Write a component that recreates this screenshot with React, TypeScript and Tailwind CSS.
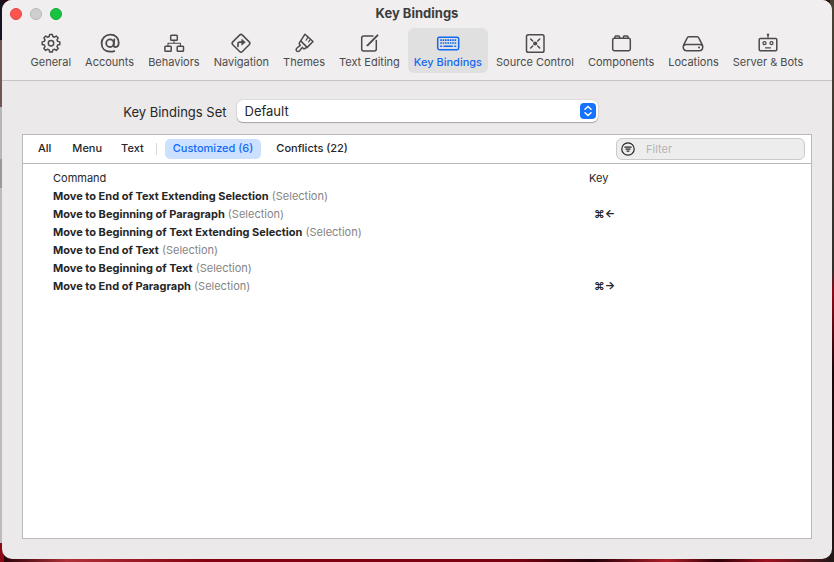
import React from "react";

type IconProps = { children: React.ReactNode };

function Icon({ children }: IconProps) {
  return (
    <svg
      width="24"
      height="22"
      viewBox="0 0 24 22"
      fill="none"
      stroke="currentColor"
      strokeWidth="1.5"
      strokeLinecap="round"
      strokeLinejoin="round"
      aria-hidden="true"
    >
      {children}
    </svg>
  );
}

const gearPath = (() => {
  const pts: string[] = [];
  for (let i = 0; i < 8; i++) {
    const a = (i * Math.PI) / 4 - Math.PI / 2;
    const at = (r: number, d: number) =>
      `${(12 + r * Math.cos(a + d)).toFixed(2)} ${(11.2 + r * Math.sin(a + d)).toFixed(2)}`;
    pts.push(at(6.9, -0.27), at(8.9, -0.15), at(8.9, 0.15), at(6.9, 0.27));
  }
  return "M" + pts.join("L") + "Z";
})();

const icons = {
  general: (
    <Icon>
      <path d={gearPath} />
      <circle cx="12" cy="11.2" r="2.7" />
    </Icon>
  ),
  accounts: (
    <Icon>
      <circle cx="12" cy="11.2" r="3.8" strokeWidth="1.8" />
      <path
        strokeWidth="1.8"
        d="M16.300 7.500 15.700 12.700c-.2 1.500.5 2.300 1.700 2.300 2 0 3.300-1.800 3.300-4.300 0-4.700-3.400-8-8.200-8-5.200 0-8.900 3.500-8.900 8.500 0 5.200 3.500 8.500 8.800 8.500 1.400 0 2.700-.2 3.900-.6"
      />
    </Icon>
  ),
  behaviors: (
    <Icon>
      <rect x="8.700" y="3.200" width="6.600" height="5" rx=".8" />
      <rect x="2.900" y="14.200" width="6.300" height="5" rx=".8" />
      <rect x="15.200" y="14.200" width="6.300" height="5" rx=".8" />
      <path d="M12 8.200v3M6 14v-2.800h12.400V14" strokeWidth="1.100" />
    </Icon>
  ),
  navigation: (
    <Icon>
      <rect x="5.200" y="4.500" width="13.600" height="13.600" rx="2" transform="rotate(45 12 11.3)" />
      <path d="M9 14.300v-2.500c0-1 .6-1.700 1.700-1.700H13" strokeWidth="1.700" />
      <path d="M13 7.600 16.300 10.200 13 12.800z" fill="currentColor" strokeWidth=".8" />
    </Icon>
  ),
  themes: (
    <Icon>
      <path d="M13 2.200 21 9.500 15.200 15.400 8.700 8.900z" />
      <path d="M8.700 8.900 7.400 10.800c-.5.8-.2 1.300.3 1.800l.6.700-3.300 2.700c-2.300 2 .5 5 2.600 2.700l2.700-3.300.9.900c.6.500 1.200.5 1.900 0l2.100-.9" />
      <path d="M16 5.100 14.100 8.200M18.400 7.400 16.600 9.800" strokeWidth="1.200" />
    </Icon>
  ),
  editing: (
    <Icon>
      <path d="M16 4H6.700c-1.300 0-2 .7-2 2v11c0 1.300.7 2 2 2h10.600c1.300 0 2-.7 2-2V8.600" />
      <path d="M20.500 3.400 12 11.900M11.100 12.900l-.7.400" strokeWidth="2" />
    </Icon>
  ),
  keyboard: (
    <Icon>
      <rect x="1.700" y="5.200" width="21" height="12.600" rx="1.700" />
      <path
        d="M4.200 8.200h16M4.200 11h16"
        strokeWidth="1.700"
        strokeLinecap="butt"
        strokeDasharray="1.700 .68"
      />
      <path d="M4.200 14.300h2M7.500 14.300h9.400M18.200 14.300h2" strokeWidth="1.600" strokeLinecap="butt" />
    </Icon>
  ),
  source: (
    <Icon>
      <rect x="3.500" y="2.700" width="17.500" height="17.500" rx="1.800" />
      <circle cx="12.200" cy="11.500" r="2.100" fill="currentColor" stroke="none" />
      <path d="M7.700 7l2 2M16.700 7l-2 2M7.700 16l2-2M16.700 16l-2-2" />
    </Icon>
  ),
  components: (
    <Icon>
      <rect x="3.700" y="6.200" width="17.600" height="12.600" rx="1.700" />
      <path d="M6 6V4.900c0-.5.3-.8.800-.8h3c.5 0 .8.300.8.800V6M14.400 6V4.900c0-.5.3-.8.800-.8h3c.5 0 .8.300.8.800V6" />
    </Icon>
  ),
  locations: (
    <Icon>
      <path d="M8.100 4.700h7.800c1 0 1.700.5 2 1.400l3.500 7c1 2.600 0 5.600-2.800 5.600H5.400c-2.800 0-3.800-3-2.800-5.600l3.500-7c.3-.9 1-1.400 2-1.400z" />
      <path d="M3 13.400c.5-.6 1.200-.9 2-.9h14c.8 0 1.500.3 2 .9" />
      <circle cx="18" cy="15.600" r="1" fill="currentColor" stroke="none" />
    </Icon>
  ),
  bots: (
    <Icon>
      <rect x="3.200" y="6.400" width="17.600" height="12.300" rx="1.200" />
      <path d="M12 3.300v2.700M9.500 15.800h5" strokeWidth="1.200" />
      <circle cx="12" cy="2.800" r="1.200" fill="currentColor" stroke="none" />
      <circle cx="8.500" cy="11.200" r="1.500" strokeWidth="1.300" />
      <circle cx="15.500" cy="11.200" r="1.500" strokeWidth="1.300" />
    </Icon>
  ),
};

const sections = [
  { label: "General", icon: icons.general },
  { label: "Accounts", icon: icons.accounts },
  { label: "Behaviors", icon: icons.behaviors },
  { label: "Navigation", icon: icons.navigation },
  { label: "Themes", icon: icons.themes },
  { label: "Text Editing", icon: icons.editing },
  { label: "Key Bindings", icon: icons.keyboard, active: true },
  { label: "Source Control", icon: icons.source },
  { label: "Components", icon: icons.components },
  { label: "Locations", icon: icons.locations },
  { label: "Server & Bots", icon: icons.bots },
];

const bindings = [
  { command: "Move to End of Text Extending Selection", key: "" },
  { command: "Move to Beginning of Paragraph", key: "⌘←" },
  { command: "Move to Beginning of Text Extending Selection", key: "" },
  { command: "Move to End of Text", key: "" },
  { command: "Move to Beginning of Text", key: "" },
  { command: "Move to End of Paragraph", key: "⌘→" },
];

function TitleBar() {
  return (
    <div className="grid h-7 grid-cols-[1fr_auto_1fr] items-center px-2">
      <div className="flex gap-2">
        <button aria-label="Close" className="size-3 rounded-full border border-[#e0443e] bg-[#ff5450]" />
        <button aria-label="Minimize" className="size-3 rounded-full border border-[#b9b8b8] bg-[#d0cfcf]" />
        <button aria-label="Zoom" className="size-3 rounded-full border border-[#12a637] bg-[#17c440]" />
      </div>
      <h1 className="pb-0.5 text-[13px] leading-4 font-bold text-[#3d3c3c]">Key Bindings</h1>
    </div>
  );
}

function Toolbar() {
  return (
    <nav className="flex justify-center gap-0.5 pb-[7px]">
      {sections.map((s) => (
        <button
          key={s.label}
          className={
            s.active
              ? "flex h-[45px] flex-col items-center rounded-md bg-[#e1e0e0] px-1.5 pt-1 text-[#1568f0]"
              : "flex h-[45px] flex-col items-center rounded-md px-1.5 pt-1 text-[#4c4b4b]"
          }
        >
          {s.icon}
          <span
            className={
              s.active
                ? "text-[11px] leading-4 font-medium whitespace-nowrap"
                : "text-[11px] leading-4 whitespace-nowrap"
            }
          >
            {s.label}
          </span>
        </button>
      ))}
    </nav>
  );
}

function BindingSet() {
  return (
    <div className="grid grid-cols-[1fr_361px_1fr] items-center gap-2.5 pt-[19px] pb-3">
      <label htmlFor="set" className="pt-0.5 text-right text-[13px] leading-4">
        Key Bindings Set
      </label>
      <div className="relative">
        <select
          id="set"
          className="block h-[22px] w-full appearance-none rounded-md bg-white px-2 text-[13px] leading-4 shadow-[0_0_0_1px_rgba(0,0,0,0.06),0_1px_1px_rgba(0,0,0,0.25)]"
        >
          <option>Default</option>
        </select>
        <span className="pointer-events-none absolute top-[3px] right-0.5 flex size-4 items-center justify-center rounded bg-[#1673fb]">
          <svg width="16" height="16" viewBox="0 0 16 16" fill="none" stroke="white" strokeWidth="1.500" strokeLinecap="round" strokeLinejoin="round" aria-hidden="true">
            <path d="M5 6.300 8 3.500 11 6.300M5 9.700 8 12.500 11 9.700" />
          </svg>
        </span>
      </div>
    </div>
  );
}

function FilterBar() {
  return (
    <div className="flex h-[29px] items-center border-b border-[#bab9b9] pr-1.5 pl-2 text-[11px] leading-4 font-medium">
      <button className="px-[7px] pb-0.5">All</button>
      <button className="ml-[7px] px-[7px] pb-0.5">Menu</button>
      <button className="ml-[5px] px-[7px] pb-0.5">Text</button>
      <span className="ml-[5px] h-3 w-px bg-[#d8d8d8]" />
      <button className="ml-2 h-5 rounded-[5px] bg-[#cce1ff] px-2 pb-0.5 text-[#1169f8]">Customized (6)</button>
      <button className="ml-2 px-[7px] pb-0.5">Conflicts (22)</button>
      <div className="ml-auto flex h-[22px] w-[189px] items-center gap-[11px] rounded-md border border-[#cbcaca] bg-[#eeeded] pl-1">
        <svg width="14" height="14" viewBox="0 0 14 14" fill="none" stroke="#262626" strokeWidth="1.200" strokeLinecap="round" aria-hidden="true">
          <circle cx="7" cy="7" r="6.200" />
          <path d="M3.800 5.100h6.400M4.900 7.100h4.200M6 9.100h2" />
        </svg>
        <input
          aria-label="Filter"
          placeholder="Filter"
          className="min-w-0 flex-1 bg-transparent font-normal outline-none placeholder:text-[#b5b4b4]"
        />
      </div>
    </div>
  );
}

function BindingTable() {
  return (
    <table className="mt-[5px] w-full table-fixed text-left text-[11px] leading-[18px]">
      <thead>
        <tr>
          <th className="w-[566px] p-0 pl-[30px] font-normal">Command</th>
          <th className="p-0 font-normal">Key</th>
        </tr>
      </thead>
      <tbody>
        {bindings.map((b) => (
          <tr key={b.command} className="h-[18px]">
            <td className="p-0 pl-[30px] whitespace-nowrap text-[#858484]">
              <b className="font-bold text-[#262626]">{b.command}</b> (Selection)
            </td>
            <td className="p-0 pl-[5px] font-bold">{b.key}</td>
          </tr>
        ))}
      </tbody>
    </table>
  );
}

export default function App() {
  return (
    <div className="flex h-screen px-0.5 pb-[3px] font-['Inter','Liberation_Sans',sans-serif] text-[#262626] [background:linear-gradient(#15141f_0_40px,#705654_40px_107px,#b7b7b7_107px_159px,#999_159px_188px,#bcbcbc_188px_543px,#8b0713_543px)_left/4px_100%_no-repeat,linear-gradient(#4b4236,#332e2a_48%,#8c0817_52%,#190508_66%,#201817)_right/4px_100%_no-repeat,linear-gradient(90deg,#220006,#b03038_8%,#850010_25%,#7a0010_62%,#220008_71%,#b01e28_80%,#300008_86%,#a01020_92%,#201817)]">
      <main className="flex min-w-0 flex-1 flex-col overflow-hidden rounded-[10px] bg-[#ebe9e9]">
        <header className="border-b border-[#c6c4c4] bg-[#f0eeee]">
          <TitleBar />
          <Toolbar />
        </header>
        <BindingSet />
        <section className="mx-5 mb-5 flex-1 border border-[#bab9b9] bg-white">
          <FilterBar />
          <BindingTable />
        </section>
      </main>
    </div>
  );
}
